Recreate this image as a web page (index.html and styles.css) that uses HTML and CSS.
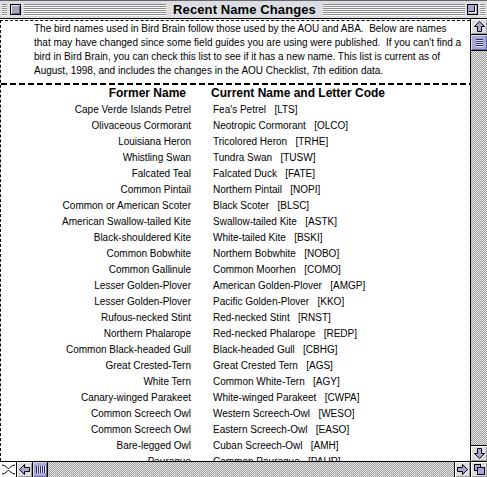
FILE: index.html
```html
<!DOCTYPE html>
<html lang="en">
  <head>
    <meta charset="UTF-8" />
    <title>Recent Name Changes</title>
    <link rel="stylesheet" href="styles.css">
  </head>
  <body>
    <div class="window">
      <div class="titlebar">
        <span class="stripes edge"></span>
        <span class="close-box"></span>
        <span class="stripes"></span>
        <span class="title">Recent Name Changes</span>
        <span class="stripes"></span>
        <span class="zoom-box">
          <svg width="11" height="11" viewBox="0 0 11 11">
            <rect x="0.5" y="0.5" width="10" height="10" fill="#a8a8d8" stroke="#000" />
            <path d="M1.5 7.5 H7.5 V1.5" fill="none" stroke="#000" />
            <path d="M1.5 8.5 H8.5 V1.5" fill="none" stroke="#fff" />
          </svg>
        </span>
        <span class="stripes edge"></span>
      </div>

      <div class="main">
        <div class="content">
          <p class="intro">
            The bird names used in Bird Brain follow those used by the AOU and ABA.&nbsp; Below are names<br>
            that may have changed since some field guides you are using were published.&nbsp; If you can't find a<br>
            bird in Bird Brain, you can check this list to see if it has a new name. This list is current as of<br>
            August, 1998, and includes the changes in the AOU Checklist, 7th edition data.
          </p>
          <div class="divider"></div>

          <div class="names">
            <div class="head former">Former Name</div>
            <div class="head current">Current Name and Letter Code</div>

            <div class="former">Cape Verde Islands Petrel</div><div>Fea's Petrel&nbsp;&nbsp; [LTS]</div>
            <div class="former">Olivaceous Cormorant</div><div>Neotropic Cormorant&nbsp;&nbsp; [OLCO]</div>
            <div class="former">Louisiana Heron</div><div>Tricolored Heron&nbsp;&nbsp; [TRHE]</div>
            <div class="former">Whistling Swan</div><div>Tundra Swan&nbsp;&nbsp; [TUSW]</div>
            <div class="former">Falcated Teal</div><div>Falcated Duck&nbsp;&nbsp; [FATE]</div>
            <div class="former">Common Pintail</div><div>Northern Pintail&nbsp;&nbsp; [NOPI]</div>
            <div class="former">Common or American Scoter</div><div>Black Scoter&nbsp;&nbsp; [BLSC]</div>
            <div class="former">American Swallow-tailed Kite</div><div>Swallow-tailed Kite&nbsp;&nbsp; [ASTK]</div>
            <div class="former">Black-shouldered Kite</div><div>White-tailed Kite&nbsp;&nbsp; [BSKI]</div>
            <div class="former">Common Bobwhite</div><div>Northern Bobwhite&nbsp;&nbsp; [NOBO]</div>
            <div class="former">Common Gallinule</div><div>Common Moorhen&nbsp;&nbsp; [COMO]</div>
            <div class="former">Lesser Golden-Plover</div><div>American Golden-Plover&nbsp;&nbsp; [AMGP]</div>
            <div class="former">Lesser Golden-Plover</div><div>Pacific Golden-Plover&nbsp;&nbsp; [KKO]</div>
            <div class="former">Rufous-necked Stint</div><div>Red-necked Stint&nbsp;&nbsp; [RNST]</div>
            <div class="former">Northern Phalarope</div><div>Red-necked Phalarope&nbsp;&nbsp; [REDP]</div>
            <div class="former">Common Black-headed Gull</div><div>Black-headed Gull&nbsp;&nbsp; [CBHG]</div>
            <div class="former">Great Crested-Tern</div><div>Great Crested Tern&nbsp;&nbsp; [AGS]</div>
            <div class="former">White Tern</div><div>Common White-Tern&nbsp;&nbsp; [AGY]</div>
            <div class="former">Canary-winged Parakeet</div><div>White-winged Parakeet&nbsp;&nbsp; [CWPA]</div>
            <div class="former">Common Screech Owl</div><div>Western Screech-Owl&nbsp;&nbsp; [WESO]</div>
            <div class="former">Common Screech Owl</div><div>Eastern Screech-Owl&nbsp;&nbsp; [EASO]</div>
            <div class="former">Bare-legged Owl</div><div>Cuban Screech-Owl&nbsp;&nbsp; [AMH]</div>
            <div class="former">Pauraque</div><div>Common Pauraque&nbsp;&nbsp; [PAUR]</div>
          </div>
        </div>

        <div class="vscroll">
          <div class="btn">
            <svg width="13" height="13" viewBox="0 0 13 13">
              <path d="M6.5 1.5 L11.5 6.5 H8.5 V11.5 H4.5 V6.5 H1.5 Z" fill="#a8a8d8" stroke="#000" />
            </svg>
          </div>
          <div class="thumb vthumb"><span></span><span></span><span></span><span></span></div>
          <div class="track"></div>
          <div class="btn">
            <svg width="13" height="13" viewBox="0 0 13 13">
              <path d="M6.5 11.5 L11.5 6.5 H8.5 V1.5 H4.5 V6.5 H1.5 Z" fill="#a8a8d8" stroke="#000" />
            </svg>
          </div>
        </div>
      </div>

      <div class="hscroll">
        <div class="split">
          <svg width="15" height="15" viewBox="0 0 15 15">
            <path d="M1 3 C5 3 6 6.5 7.5 6.5 C9 6.5 10 3 14 3 M1 12 C5 12 6 8.5 7.5 8.5 C9 8.5 10 12 14 12" fill="none" stroke="#000" />
          </svg>
        </div>
        <div class="btn">
          <svg width="13" height="13" viewBox="0 0 13 13">
            <path d="M1.5 6.5 L6.5 1.5 V4.5 H11.5 V8.5 H6.5 V11.5 Z" fill="#a8a8d8" stroke="#000" />
          </svg>
        </div>
        <div class="thumb hthumb"><span></span><span></span><span></span><span></span><span></span></div>
        <div class="track"></div>
        <div class="btn">
          <svg width="13" height="13" viewBox="0 0 13 13">
            <path d="M11.5 6.5 L6.5 1.5 V4.5 H1.5 V8.5 H6.5 V11.5 Z" fill="#a8a8d8" stroke="#000" />
          </svg>
        </div>
        <div class="btn">
          <svg width="13" height="13" viewBox="0 0 13 13">
            <rect x="1.5" y="1.5" width="6" height="6" fill="#a8a8d8" stroke="#000" />
            <rect x="4.5" y="4.5" width="7" height="7" fill="#a8a8d8" stroke="#000" />
          </svg>
        </div>
      </div>
    </div>
  </body>
</html>
```

FILE: styles.css
```css
body {
  margin: 0;
  background-color: #fff;
  font-family: "Liberation Sans", Arial, sans-serif;
  font-size: 10px;
  color: #000;
}

.window {
  width: 487px;
  height: 477px;
  display: grid;
  grid-template-rows: 19px 442px 16px;
  overflow: hidden;
  background-color: #fff;
}

/* title bar */

.titlebar {
  box-sizing: border-box;
  display: flex;
  align-items: center;
  gap: 2px;
  padding: 0 2px;
  background-color: #dcdce2;
  border-top: 1px solid #666;
  border-bottom: 1px solid #000;
}

.stripes {
  flex: 1;
  height: 12px;
  background: repeating-linear-gradient(to bottom, #8a8a8a 0 1px, #fafafa 1px 2px);
}

.stripes.edge {
  flex: none;
  width: 5px;
}

.close-box {
  flex: none;
  width: 9px;
  height: 9px;
  margin: 0 1px;
  border: 1px solid #000;
  background-color: #a4a4b8;
  box-shadow: inset 1px 1px 0 #e8e8f0, inset -1px -1px 0 #6c6c80;
}

.title {
  flex: none;
  padding: 0 5px;
  font-weight: bold;
  font-size: 13px;
  letter-spacing: 0.1px;
}

.zoom-box {
  flex: none;
  display: flex;
}

/* content */

.main {
  display: grid;
  grid-template-columns: 470px 17px;
  height: 442px;
  overflow: hidden;
}

.content {
  overflow: hidden;
  border-left: 1px dashed #000;
  border-top: 1px dashed #000;
  margin-top: 1px;
}

.intro {
  margin: 0;
  padding: 1px 0 0 33px;
  line-height: 14px;
  white-space: nowrap;
}

.divider {
  height: 2px;
  margin-top: 5px;
  background: repeating-linear-gradient(to right, #000 0 6px, transparent 6px 9px);
}

.names {
  display: grid;
  grid-template-columns: 190px 1fr;
  column-gap: 22px;
  grid-auto-rows: 16px;
  align-items: center;
  white-space: nowrap;
}

.names .former {
  text-align: right;
}

.names .head {
  font-weight: bold;
  font-size: 12px;
  height: 12px;
  line-height: 12px;
}

.names .head.former {
  padding-right: 5px;
}

.names .head.current {
  margin-left: -2px;
}

/* scroll bars */

.vscroll {
  display: grid;
  grid-template-rows: 16px 16px 1fr 16px;
  border-left: 1px solid #000;
  background-color: #c8c8c8;
}

.hscroll {
  display: grid;
  grid-template-columns: 16px 16px 16px 1fr 16px 17px;
  border-top: 1px solid #000;
  background-color: #c8c8c8;
}

.track {
  background-color: #c8c8c8;
  background-image: conic-gradient(#a0a0a0 25%, #e4e4e4 0 50%, #a0a0a0 0 75%, #e4e4e4 0);
  background-size: 2px 2px;
}

.btn {
  box-sizing: border-box;
  display: flex;
  align-items: center;
  justify-content: center;
  background-color: #dddddd;
  box-shadow: inset 1px 1px 0 #fff, inset -1px -1px 0 #999;
}

.vscroll .btn:first-child {
  border-bottom: 1px solid #000;
}

.vscroll .btn:last-child {
  border-top: 1px solid #000;
}

.hscroll .btn {
  border-left: 1px solid #000;
}

.split {
  display: flex;
  align-items: center;
  justify-content: center;
  background-color: #fff;
}

.thumb {
  box-sizing: border-box;
  background-color: #a8a8d8;
  box-shadow: inset 1px 1px 0 #d8d8f0, inset -1px -1px 0 #6868a0;
  display: flex;
  align-items: center;
  justify-content: center;
  gap: 1px;
}

.vthumb {
  flex-direction: column;
  border-bottom: 1px solid #000;
}

.vthumb span {
  width: 7px;
  height: 1px;
  background-color: #303060;
  box-shadow: 0 1px 0 #e0e0f8;
}

.hthumb {
  border-left: 1px solid #000;
  border-right: 1px solid #000;
}

.hthumb span {
  width: 1px;
  height: 7px;
  background-color: #303060;
  box-shadow: 1px 0 0 #e0e0f8;
}
```
